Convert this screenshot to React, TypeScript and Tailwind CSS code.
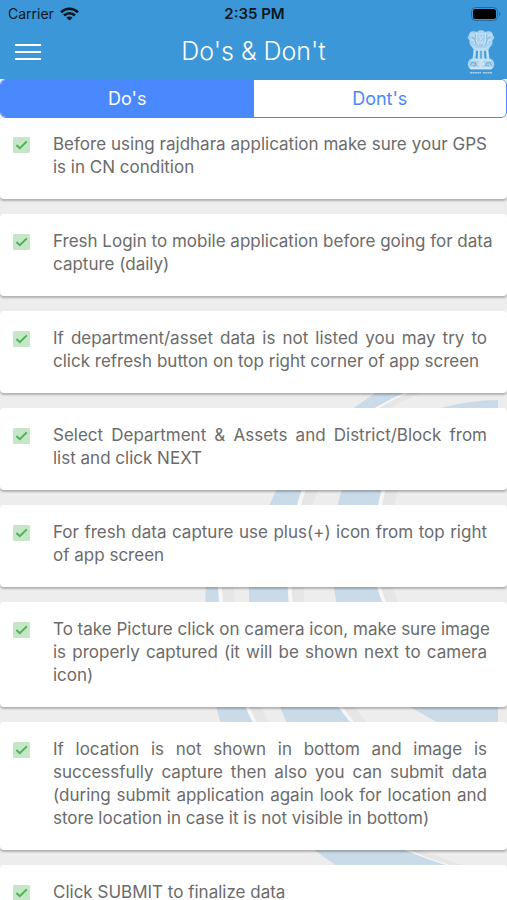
import { useState } from "react";

type TabName = "dos" | "donts";

// one entry per tip, split into its display lines
const dos: string[][] = [
  ["Before using rajdhara application make sure your GPS", "is in CN condition"],
  ["Fresh Login to mobile application before going for data", "capture (daily)"],
  [
    "If department/asset data is not listed you may try to",
    "click refresh button on top right corner of app screen",
  ],
  ["Select Department & Assets and District/Block from", "list and click NEXT"],
  ["For fresh data capture use plus(+) icon from top right", "of app screen"],
  [
    "To take Picture click on camera icon, make sure image",
    "is properly captured (it will be shown next to camera",
    "icon)",
  ],
  [
    "If location is not shown in bottom and image is",
    "successfully capture then also you can submit data",
    "(during submit application again look for location and",
    "store location in case it is not visible in bottom)",
  ],
  ["Click SUBMIT to finalize data"],
];

// swoosh bands of the page background
const bands: string[] = [
  "M210 540C204 580 202 640 216 707C230 765 262 815 313 850C340 870 370 890 400 900L500 880C470 875 425 860 403 850C320 815 270 765 245 707C222 650 217 600 217 560Z",
  "M420 370L377 393C335 420 295 455 277 490C262 520 249 550 249 595C249 640 265 680 280 707C300 770 400 840 498 840L498 800C430 790 370 755 338 707C305 660 290 630 288 595C286 555 290 525 302 490C325 440 365 410 407 393L440 375Z",
  "M498 401L498 425C440 430 395 460 382 490C373 520 372 560 377 587C390 640 440 690 498 695L498 740C470 735 450 730 435 722L408 707C360 675 340 630 334 590C330 550 335 510 342 490C355 455 395 420 445 408C460 404 480 401 498 401Z",
];

function Swoosh() {
  return (
    <svg
      className="absolute inset-x-0 top-0 w-full"
      viewBox="0 118 507 782"
      aria-hidden="true"
    >
      <clipPath id="swoosh-edge">
        <rect x="0" y="118" width="498" height="782" />
      </clipPath>
      <g clipPath="url(#swoosh-edge)">
        {bands.map((d) => (
          <g key={d}>
            <path d={d} fill="#e6e6e6" transform="translate(16 0)" />
            <path d={d} fill="#f7f7f7" transform="translate(4 0)" />
            <path d={d} fill="#c9dbe8" />
          </g>
        ))}
      </g>
    </svg>
  );
}

function WifiIcon() {
  return (
    <svg width="19" height="14" viewBox="0 0 19 14" aria-hidden="true">
      <g fill="none" stroke="#0a1720" strokeWidth="2.6">
        <path d="M1 5.2C5.8 0.6 13.2 0.6 18 5.2" />
        <path d="M4 8.5C7.2 5.5 11.8 5.5 15 8.5" />
      </g>
      <path d="M9.5 13.5L6.3 10.6C8.1 9 10.9 9 12.7 10.6Z" fill="#0a1720" />
    </svg>
  );
}

function BatteryIcon() {
  return (
    <svg width="30" height="14" viewBox="0 0 30 14" aria-hidden="true">
      <rect x="0.5" y="0.5" width="26" height="13" rx="4" fill="none" stroke="#2a6a97" />
      <rect x="2" y="2" width="23" height="10" rx="2.5" fill="#000" />
      <path d="M28 4.8C29.8 5.4 29.8 8.6 28 9.2Z" fill="#2a6a97" />
    </svg>
  );
}

function Emblem() {
  return (
    <svg width="28" height="46" viewBox="0 0 28 46" role="img" aria-label="State emblem">
      <g fill="#a9d2ef">
        <path d="M10 3C11 0.5 17 0.5 18 3L20 2.5C23 1.5 26 3 26 6L27.5 8.5L25.5 11.5C26 15 24.5 17 23 18L21 22H7L5 18C3.5 17 2 15 2.5 11.5L0.5 8.5L2 6C2 3 5 1.5 8 2.5Z" />
        <path d="M6.5 21H9.3L8.6 30H5.5ZM11 21H13.4V30H10.4ZM14.6 21H17L17.6 30H14.6ZM18.7 21H21.5L22.5 30H19.4Z" />
        <path d="M5 29.5H23C28.5 31.5 28.5 38 24 40.5H4C-0.5 38 -0.5 31.5 5 29.5Z" />
      </g>
      <g fill="none" stroke="#e2f1fb" strokeWidth="0.7">
        <path d="M10 4C8.5 7 9 12 11 15L14 18L17 15C19 12 19.5 7 18 4M11 5H17M11.5 7.5L13 8M16.5 7.5L15 8M14 8V11M12 12.5C13 13.6 15 13.6 16 12.5" />
        <path d="M3 6.5C5 4.5 7 6 8 8M25 6.5C23 4.5 21 6 20 8M3.5 11C6 10 7.5 12 8 15M24.5 11C22 10 20.5 12 20 15M5.5 17L9 20H19L22.5 17" />
        <path d="M7.6 21L6.8 30M12 21L11.8 30M16 21L16.2 30M20.4 21L21.2 30" />
        <path d="M4 31H24M3 39.2H25" strokeWidth="1.2" />
        <circle cx="14" cy="35" r="2.6" />
        <path d="M14 32.5V37.5M11.5 35H16.5" />
      </g>
      <g fill="none" stroke="#5fabdf" strokeWidth="0.7">
        <path d="M8.6 6C7.6 9 8 13 9.4 16M19.4 6C20.4 9 20 13 18.6 16M5 8.5L6.5 9.5M23 8.5L21.5 9.5M12 16L14 17.5L16 16" />
        <path d="M3.5 36.5L5 33.5L8.5 34L9 37M19 37L19.5 34L23 33.5L24.5 36.5M6 36.5H7.5M20.5 36.5H22" strokeWidth="1" />
      </g>
      <g stroke="#a9d2ef" strokeWidth="1.6">
        <path d="M3 43.7H14" strokeDasharray="2 0.4" />
        <path d="M15.8 43.7H25" strokeDasharray="2 0.4" />
      </g>
    </svg>
  );
}

function CheckIcon() {
  return (
    <svg
      className="mt-1 shrink-0"
      width="17"
      height="17"
      viewBox="0 0 17 17"
      aria-hidden="true"
    >
      <rect width="17" height="16" rx="1.5" fill="#c5e6c7" />
      <path d="M3.4 8L6.8 11.2L13.8 4.4" fill="none" stroke="#4db251" strokeWidth="1.9" />
    </svg>
  );
}

export default function App() {
  const [tab, setTab] = useState<TabName>("dos");

  return (
    <div className="flex h-screen flex-col overflow-hidden bg-[#ededed] font-['Inter',sans-serif]">
      <header className="h-[79px] shrink-0 bg-[#3b97d8]">
        <div className="grid h-7 grid-cols-3 items-center pr-1.5 pl-2 text-[#0a1720]">
          <div className="flex items-center gap-1.5 text-sm">
            <span>Carrier</span>
            <WifiIcon />
          </div>
          <span className="text-center text-[15px] font-semibold">2:35 PM</span>
          <div className="flex justify-end">
            <BatteryIcon />
          </div>
        </div>
        <div className="grid h-12 grid-cols-[40px_1fr_40px] items-center px-3">
          <button
            type="button"
            aria-label="Menu"
            className="flex w-8 flex-col gap-[5px] px-[3px]"
          >
            <span className="h-0.5 w-full bg-white" />
            <span className="h-0.5 w-full bg-white" />
            <span className="h-0.5 w-full bg-white" />
          </button>
          <h1 className="text-center text-[25px] font-light text-white">Do's &amp; Don't</h1>
          <div className="flex justify-end">
            <Emblem />
          </div>
        </div>
      </header>

      <div className="relative z-10 flex h-[39px] shrink-0 overflow-hidden rounded-md border border-[#4a88fe] bg-white text-lg">
        <button
          type="button"
          onClick={() => setTab("dos")}
          className={`flex-1 ${
            tab === "dos" ? "bg-[#4a88fe] text-white" : "bg-white text-[#4a88fe]"
          }`}
        >
          Do's
        </button>
        <button
          type="button"
          onClick={() => setTab("donts")}
          className={`flex-1 ${
            tab === "donts" ? "bg-[#4a88fe] text-white" : "bg-white text-[#4a88fe]"
          }`}
        >
          Dont's
        </button>
      </div>

      <main className="relative -mt-px min-h-0 flex-1">
        <Swoosh />
        <ul className="relative flex h-full flex-col gap-[15px] overflow-y-auto [scrollbar-width:none]">
          {tab === "dos" &&
            dos.map((lines) => (
              <li
                key={lines[0]}
                className="flex shrink-0 gap-[23px] rounded bg-white pt-4 pr-5 pb-5 pl-[13px] shadow-[0_2px_2px_rgba(0,0,0,0.25)]"
              >
                <CheckIcon />
                <p className="min-w-0 flex-1 text-[17px] leading-[23px] whitespace-nowrap text-[#6b6b6b]">
                  {lines.map((line, i) => (
                    <span
                      key={line}
                      className={`block ${
                        i < lines.length - 1 ? "text-justify [text-align-last:justify]" : ""
                      }`}
                    >
                      {line}{" "}
                    </span>
                  ))}
                </p>
              </li>
            ))}
        </ul>
      </main>
    </div>
  );
}
